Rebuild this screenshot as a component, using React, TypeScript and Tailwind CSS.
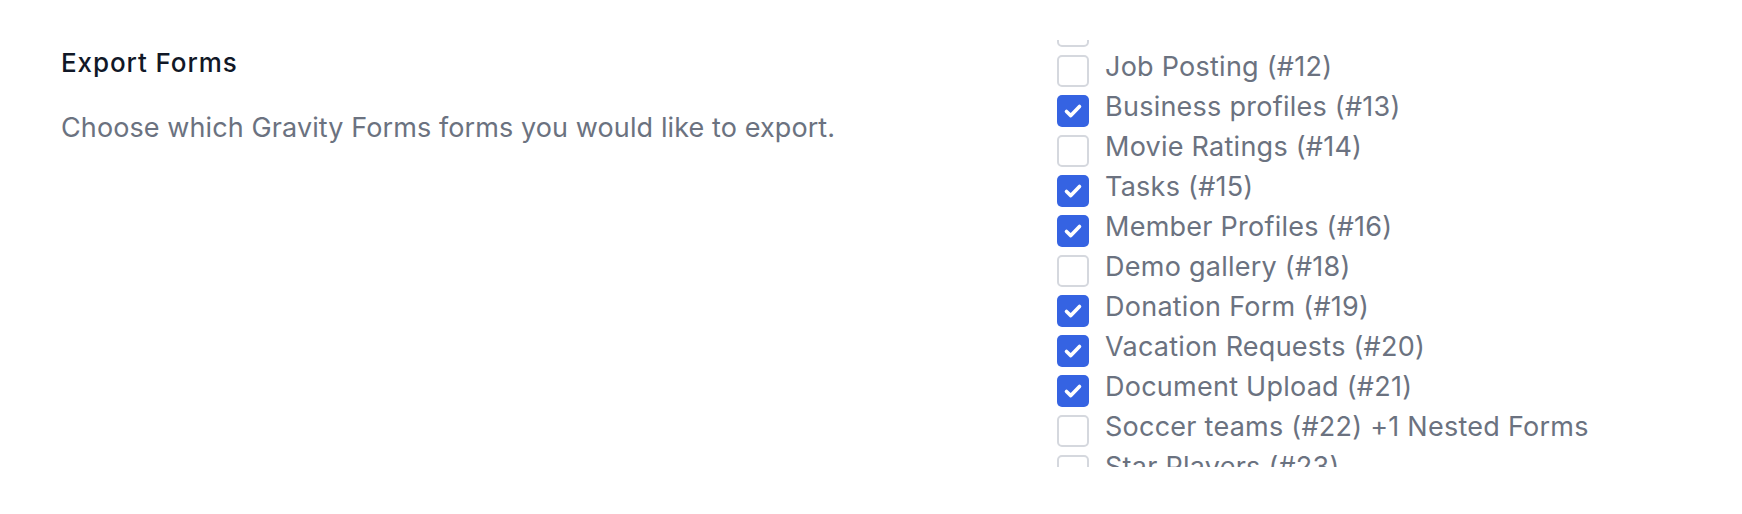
import React from 'react';

const forms = [
  { label: 'Contact Us (#11)', checked: false },
  { label: 'Job Posting (#12)', checked: false },
  { label: 'Business profiles (#13)', checked: true },
  { label: 'Movie Ratings (#14)', checked: false },
  { label: 'Tasks (#15)', checked: true },
  { label: 'Member Profiles (#16)', checked: true },
  { label: 'Demo gallery (#18)', checked: false },
  { label: 'Donation Form (#19)', checked: true },
  { label: 'Vacation Requests (#20)', checked: true },
  { label: 'Document Upload (#21)', checked: true },
  { label: 'Soccer teams (#22) +1 Nested Forms', checked: false },
  { label: 'Star Players (#23)', checked: false },
  { label: 'Event Registration (#24)', checked: false },
];

const Checkbox: React.FC<{ checked: boolean }> = ({ checked }) =>
  checked ? (
    <span className="mt-[8px] flex h-[32px] w-[32px] shrink-0 items-center justify-center rounded-[5px] bg-[#3563e2]">
      <svg viewBox="0 0 32 32" className="h-[32px] w-[32px]">
        <path d="M9.5 16.5 L13.8 20.6 L22.5 11.5" fill="none" stroke="white" strokeWidth="3.6" strokeLinecap="round" strokeLinejoin="round" />
      </svg>
    </span>
  ) : (
    <span className="mt-[8px] h-[32px] w-[32px] shrink-0 rounded-[5px] border-2 border-[#d5d8de] bg-white" />
  );

const App: React.FC = () => {
  return (
    <div className="h-[514px] w-full bg-white font-['Inter','Noto_Sans',sans-serif]">
      <div className="grid grid-cols-[996px_1fr] pl-[61px]">
        <div className="pt-[47px]">
          <h3 className="text-[26px] leading-[32px] font-medium tracking-[0.9px] text-[#111827]">Export Forms</h3>
          <p className="mt-[29px] text-[27px] leading-[40px] tracking-[0.1px] text-[#6b7280]">
            Choose which Gravity Forms forms you would like to export.
          </p>
        </div>

        <div className="pt-[40px]">
          <div className="h-[427px] overflow-hidden">
            <ul className="-mt-[33px]">
              {forms.map((f, i) => (
                <li key={i} className="flex h-[40px] items-start gap-[16px]">
                  <Checkbox checked={f.checked} />
                  <span className="text-[27px] leading-[40px] tracking-[0.25px] whitespace-nowrap text-[#6b7280]">{f.label}</span>
                </li>
              ))}
            </ul>
          </div>
        </div>
      </div>
    </div>
  );
};

export default App;
